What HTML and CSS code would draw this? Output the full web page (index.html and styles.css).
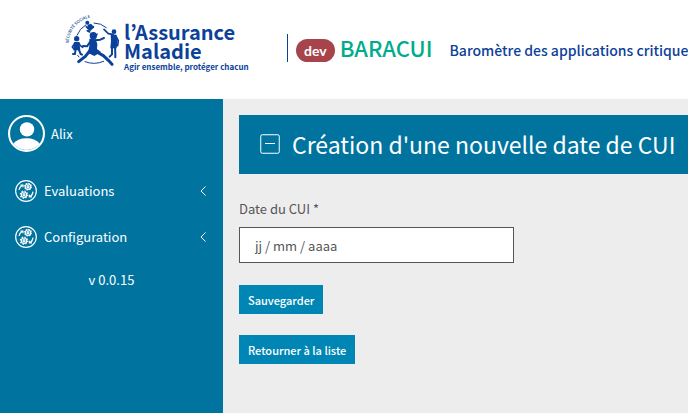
FILE: index.html
```html
<!DOCTYPE html>
<html lang="fr">
<head>
<meta charset="utf-8">
<meta name="viewport" content="width=device-width, initial-scale=1">
<title>BARACUI</title>
<link rel="stylesheet" href="styles.css">
</head>
<body>
<header class="header">
  <a class="logo" href="#">
    <svg class="logo-mark" viewBox="30 27 165 156" aria-hidden="true">
      <path id="arc" d="M41 115 A78 78 0 0 1 122 37" fill="none"/>
      <text class="logo-arc"><textPath href="#arc">SÉCURITÉ SOCIALE</textPath></text>
      <g fill="none" stroke="currentColor" stroke-linecap="round" stroke-linejoin="round">
        <g stroke-width="3">
          <path d="M66 91Q74 70 92 60M117 54Q138 54 154 68M68 151L72 156M90 170Q118 181 146 169"/>
        </g>
        <path stroke-width="8" d="M112 103L109 126"/>
        <path stroke-width="6" d="M108 107L96 124L84 123M120 106L136 104L147 99"/>
        <path stroke-width="9" d="M104 138L91 154L71 170"/>
        <path stroke-width="9" d="M120 138L145 152L160 166L171 178"/>
        <path stroke-width="5" d="M71 114L76 122L83 127M59 115L52 126L57 132M174 88L160 86L147 73M182 92L190 107L188 122"/>
        <path stroke-width="6" d="M62 130L60 147L54 147M70 130L77 147L81 149M171 122L171 148L164 155M180 122L181 149L181 157"/>
        <path stroke-width="5" d="M99 70L94 65M106 68L115 65M97 77L104 81L101 76"/>
      </g>
      <g fill="currentColor">
        <circle cx="115" cy="92" r="11"/><path d="M103 101L122 103L127 117L126 132L138 141L118 153L99 144L103 122ZM122 88L129 85L126 94Z"/>
        <circle cx="65" cy="101" r="8"/><path d="M57 111H73L76 136H55Z"/>
        <circle cx="177" cy="80" r="7"/><path d="M167 88L184 89L188 106L185 130H166L168 108Z"/>
        <circle cx="97" cy="53" r="6"/><path d="M98 59L108 56L118 67L106 78L97 71Z"/>
      </g>
    </svg>
    <span class="logo-text">
      <strong class="logo-name">l’Assurance<br>Maladie</strong>
      <span class="logo-tagline">Agir ensemble, protéger chacun</span>
    </span>
  </a>
  <div class="product">
    <span class="badge">dev</span>
    <span class="product-name">BARACUI</span>
    <span class="product-tagline">Baromètre des applications critiques</span>
  </div>
</header>
<div class="layout">
  <nav class="sidebar">
    <a class="user" href="#">
      <svg class="avatar" viewBox="0 0 36 36" aria-hidden="true">
        <circle cx="18" cy="18" r="17" fill="none" stroke="currentColor" stroke-width="2"/>
        <circle cx="18.500" cy="14" r="7" fill="currentColor"/>
        <path d="M5 28Q9 22.500 18 22.500T31 28A17 17 0 0 1 5 28Z" fill="currentColor"/>
      </svg>
      <span>Alix</span>
    </a>
    <ul class="menu">
      <li>
        <button class="menu-item" type="button">
          <svg class="menu-icon" viewBox="0 0 66 66" aria-hidden="true"><use href="#gears"/></svg>
          <span>Evaluations</span>
          <svg class="chevron" viewBox="0 0 6 10" aria-hidden="true"><path d="M5.500 .5L1 5L5.500 9.500"/></svg>
        </button>
      </li>
      <li>
        <button class="menu-item" type="button">
          <svg class="menu-icon" viewBox="0 0 66 66" aria-hidden="true">
            <g id="gears" fill="none" stroke="currentColor" stroke-width="3.500">
              <circle cx="33" cy="33" r="31"/>
              <circle cx="39" cy="20" r="8"/><circle cx="39" cy="20" r="3"/>
              <circle cx="39" cy="20" r="10" stroke-dasharray="4 3.850"/>
              <circle cx="27" cy="44" r="8"/><circle cx="27" cy="44" r="3"/>
              <circle cx="27" cy="44" r="11" stroke-dasharray="4 4.640"/>
              <path d="M12 30Q14 20 23 15M16 15H24V22M54 35Q53 46 44 51M51 51H43V44"/>
            </g>
          </svg>
          <span>Configuration</span>
          <svg class="chevron" viewBox="0 0 6 10" aria-hidden="true"><path d="M5.500 .5L1 5L5.500 9.500"/></svg>
        </button>
      </li>
    </ul>
    <p class="version">v 0.0.15</p>
  </nav>
  <main class="content">
    <h1 class="title">
      <svg class="title-icon" viewBox="0 0 20 20" aria-hidden="true">
        <rect x=".75" y=".75" width="18.500" height="18.500" rx="1.500"/><path d="M5 9.500H15"/>
      </svg>
      <span>Création d'une nouvelle date de CUI</span>
    </h1>
    <form class="form">
      <label class="label" for="date">Date du CUI *</label>
      <input class="field" id="date" type="text" placeholder="jj / mm / aaaa">
      <button class="btn" type="button">Sauvegarder</button>
      <button class="btn" type="button">Retourner à la liste</button>
    </form>
  </main>
</div>
</body>
</html>
```

FILE: styles.css
```css
* {
  box-sizing: border-box;
}

body {
  display: flex;
  flex-direction: column;
  min-height: 100vh;
  margin: 0;
  overflow-x: hidden;
  background: #ededed;
  color: #565656;
  font: 13px/20px "Noto Sans CJK JP", "Noto Sans", sans-serif;
}

a {
  color: inherit;
  text-decoration: none;
}

button,
input {
  font: inherit;
}

.header {
  display: flex;
  align-items: flex-start;
  padding: 14px 0 25px 65px;
  background: #fff;
  color: #0c419a;
  white-space: nowrap;
}

.logo {
  display: flex;
  flex: none;
  gap: 4px;
  width: 222px;
}

.logo-mark {
  flex: none;
  width: 55px;
  height: 52px;
}

.logo-arc {
  fill: currentColor;
  font-size: 12px;
  font-weight: 500;
}

.logo-text {
  display: flex;
  flex-direction: column;
  padding-top: 8px;
}

.logo-name {
  font-size: 20px;
  line-height: 19px;
}

.logo-tagline {
  font-size: 8px;
  font-weight: 700;
  line-height: 14px;
}

.product {
  display: flex;
  align-items: center;
  height: 28px;
  margin-top: 20px;
  padding-left: 8px;
  border-left: 1px solid #0c419a;
}

.badge {
  margin: 4px 5px 0 0;
  padding: 0 8px;
  border-radius: 12px;
  background: #a6434b;
  color: #fff;
  font-family: Lato, sans-serif;
  font-size: 14px;
  font-weight: 700;
  line-height: 23px;
}

.product-name {
  margin: 0 17px 2px 0;
  color: #00ac8c;
  font-size: 22px;
  font-weight: 500;
}

.product-tagline {
  margin-top: 4px;
  font-size: 14px;
  font-weight: 500;
}

.layout {
  display: flex;
  flex: 1;
}

.sidebar {
  flex: none;
  width: 223px;
  padding: 16px 0;
  background: #00749f;
  color: #fff;
}

.user {
  display: flex;
  align-items: center;
  gap: 6px;
  padding-left: 8px;
}

.avatar {
  width: 37px;
  height: 37px;
}

.menu {
  margin: 16px 0 0;
  padding: 0;
  list-style: none;
}

.menu-item {
  display: flex;
  align-items: center;
  gap: 7px;
  width: 100%;
  height: 46px;
  padding: 0 17px 0 15px;
  border: 0;
  background: none;
  color: inherit;
}

.menu-icon {
  width: 22px;
  height: 22px;
}

.chevron {
  width: 6px;
  height: 10px;
  margin-left: auto;
  fill: none;
  stroke: currentColor;
}

.version {
  margin: 10px 0 0;
  text-align: center;
}

.content {
  flex: 1;
  min-width: 0;
  padding: 16px 0 16px 16px;
}

.title {
  display: flex;
  align-items: center;
  gap: 12px;
  height: 59px;
  margin: 0;
  padding: 0 0 2px 21px;
  background: #00749f;
  color: #fff;
  font-size: 23px;
  font-weight: 400;
  line-height: 30px;
  white-space: nowrap;
}

.title-icon {
  flex: none;
  width: 20px;
  height: 20px;
  fill: none;
  stroke: currentColor;
}

.form {
  display: flex;
  flex-direction: column;
  align-items: flex-start;
  padding-top: 25px;
}

.field {
  width: 275px;
  height: 36px;
  margin: 8px 0 0;
  padding: 0 15px;
  border: 1px solid #565656;
  border-radius: 0;
  background: #fff;
  color: #565656;
}

.field::placeholder {
  color: inherit;
  opacity: 1;
}

.btn {
  height: 29px;
  margin-top: 21px;
  padding: 0 9px;
  border: 0;
  background: #0086b4;
  color: #fff;
  font-size: 11px;
  font-weight: 500;
}

.field + .btn {
  margin-top: 22px;
}
```
